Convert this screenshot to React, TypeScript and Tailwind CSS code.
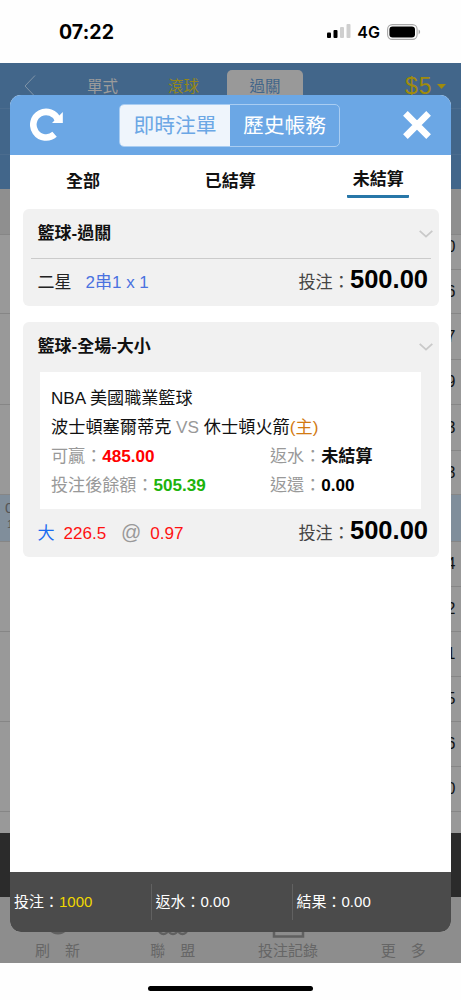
import clsx from "clsx";

const boardRows = [
  { odds: ["0", "6"], height: "h-[79px]", first: "h-[34px] pb-[10px]" },
  { odds: ["7", "9"], height: "h-[91px]", first: "h-[45px]" },
  { odds: ["3", "3"], height: "h-[90px]", first: "h-[45px]" },
  { odds: [""], height: "h-[47px]", first: "h-[46px]", active: true },
  { odds: ["4", "2"], height: "h-[90px]", first: "h-[44px]" },
  { odds: ["1", "5"], height: "h-[90px]", first: "h-[44px]" },
  { odds: ["6", "0"], height: "h-[90px]", first: "h-[44px]" },
];

const tabs = ["全部", "已結算", "未結算"];

const totals = [
  { label: "投注", value: "1000", highlight: true },
  { label: "返水", value: "0.00" },
  { label: "結果", value: "0.00" },
];

function StatusBar() {
  return (
    <div className="flex h-[63px] shrink-0 items-center bg-[#fefefe] pr-[40px] pl-[59px] font-['Inter',sans-serif] font-semibold text-black">
      <span className="text-[19.5px] leading-6 font-bold tracking-[0.1px]">07:22</span>
      <div className="ml-auto flex items-center">
        <svg width="24" height="15" viewBox="0 0 24 15">
          <rect x="0" y="8.5" width="4" height="5.5" rx="1" fill="#000" />
          <rect x="6.5" y="6" width="4" height="8" rx="1" fill="#000" />
          <rect x="13" y="3" width="4" height="11" rx="1" fill="#cfcfcf" />
          <rect x="19.5" y="0" width="4" height="14" rx="1" fill="#cfcfcf" />
        </svg>
        <span className="ml-[6px] text-[16px] leading-6">4G</span>
        <svg className="ml-[7px]" width="34" height="16" viewBox="0 0 34 16">
          <rect x="0.6" y="0.6" width="29.5" height="14.8" rx="4.6" fill="none" stroke="#a8a8a8" strokeWidth="1.1" />
          <rect x="2.4" y="2.4" width="25.6" height="11" rx="3.2" fill="#000" />
          <path d="M31.6 5.6v4.8c2-.9 2-3.9 0-4.8z" fill="#a8a8a8" />
        </svg>
      </div>
    </div>
  );
}

function NavHeader() {
  return (
    <div className="h-[126px] shrink-0 bg-[#42668a]">
      <div className="flex h-[46px] border-b border-[#4b6c8e] pt-[7px] text-[15.5px] leading-[34px] text-[#9b9b9b]">
        <svg className="mt-[5px] ml-[24px]" width="12" height="22" viewBox="0 0 12 22" fill="none" stroke="#8295a8">
          <path d="M11 0.5L1 11l10 10.5" />
        </svg>
        <span className="ml-[51px]">單式</span>
        <span className="ml-[50px] text-[#94861a]">滾球</span>
        <span className="ml-[28px] h-[39px] w-[76px] rounded-t-[5px] bg-[#999] text-center text-[#42668a]">過關</span>
        <span className="ml-[102px] text-[23px] leading-[32px] tracking-[1px] text-[#a08b0c]">$5</span>
        <svg className="mt-[14px] ml-[4px]" width="9" height="5" viewBox="0 0 9 5">
          <path d="M0 0h9L4.5 5z" fill="#a08b0c" />
        </svg>
      </div>
      <div className="h-[46px] border-b border-[#4b6c8e]" />
    </div>
  );
}

function Board() {
  return (
    <div className="flex h-[644px] shrink-0 flex-col overflow-hidden bg-[#999]">
      <div className="h-[46px] shrink-0 border-b border-[#868686] bg-[#8f8f8f]" />
      {boardRows.map((row, i) => (
        <div key={i} className={clsx("flex shrink-0 border-b border-[#868686]", row.height, row.active && "bg-[#808e9b]")}>
          <div className="flex-1 pt-[4px] pl-[5px] text-[15px] leading-[17px] text-[#555]">
            {row.active && (
              <>
                <div>0</div>
                <div className="pl-[2px] text-[11px]">1</div>
              </>
            )}
          </div>
          <div className="flex w-[60px] flex-col">
            {row.odds.map((value, j) => (
              <div
                key={j}
                className={clsx(
                  "flex items-center justify-end pr-[5.5px] text-[16px] leading-none text-[#111]",
                  j === 0 ? row.first : "flex-1 border-t border-[#868686]",
                )}
              >
                {value}
              </div>
            ))}
          </div>
        </div>
      ))}
    </div>
  );
}

function BottomNav() {
  return (
    <div className="grid h-[66px] shrink-0 grid-cols-4 bg-[#8d8d8d] text-center text-[15px] leading-6 text-[#666]">
      <div>
        <svg className="mx-auto h-[42px]" width="40" height="42" viewBox="0 0 40 42" fill="none" stroke="#606060" strokeWidth="3">
          <circle cx="20" cy="25" r="11" />
        </svg>
        刷　新
      </div>
      <div>
        <svg className="mx-auto h-[42px]" width="40" height="42" viewBox="0 0 40 42" fill="none" stroke="#606060" strokeWidth="2.5">
          <circle cx="10.5" cy="32.5" r="4.5" />
          <circle cx="20" cy="32.5" r="4.5" />
          <circle cx="29.5" cy="32.5" r="4.5" />
        </svg>
        聯　盟
      </div>
      <div>
        <svg className="mx-auto h-[42px]" width="40" height="42" viewBox="0 0 40 42" fill="none" stroke="#606060" strokeWidth="2.5">
          <rect x="6" y="12" width="29" height="27.5" />
        </svg>
        投注記錄
      </div>
      <div>
        <div className="h-[42px]" />
        更　多
      </div>
    </div>
  );
}

function CardTitle({ children }: { children: string }) {
  return (
    <div className="flex h-[50px] items-center justify-between pr-[5.5px] pl-[14.5px] text-[17px] font-bold text-[#111]">
      {children}
      <svg width="14" height="8" viewBox="0 0 14 8" fill="none" stroke="#c9c9c9" strokeWidth="1.8">
        <path d="M0.7 0.8L7 6.6l6.3-5.8" />
      </svg>
    </div>
  );
}

function Stake({ amount }: { amount: string }) {
  return (
    <span className="ml-auto flex items-baseline">
      <span className="text-[17.2px] text-[#444]">投注：</span>
      <span className="text-[25.5px] font-bold text-black">{amount}</span>
    </span>
  );
}

function BetDialog() {
  return (
    <div className="absolute top-[95px] left-[9.5px] flex h-[837px] w-[441.5px] flex-col overflow-hidden rounded-[11px] bg-white">
      <div className="flex h-[60px] shrink-0 items-center bg-[#6ba7e5] pr-[20px] pl-[20.5px]">
        <svg width="34" height="34" viewBox="0 0 34 34">
          <path d="M28 12A12.8 12.8 0 1 0 24.6 26.3" fill="none" stroke="#fff" strokeWidth="6.6" />
          <path d="M32.8 4v10.9H22z" fill="#fff" />
        </svg>
        <div className="ml-[55px] flex h-[43px] w-[221px] overflow-hidden rounded-[5px] border border-[#a9cdf2] text-center text-[20.8px] leading-[41px]">
          <div className="w-[110px] bg-[#eff5fc] text-[#6ba7e5]">即時注單</div>
          <div className="flex-1 text-white">歷史帳務</div>
        </div>
        <svg className="ml-auto" width="28" height="28" viewBox="0 0 28 28" fill="none" stroke="#fff" strokeWidth="6.6">
          <path d="M2.4 2.4l23.2 23.2M25.6 2.4L2.4 25.6" />
        </svg>
      </div>

      <div className="grid h-[54px] shrink-0 grid-cols-3 text-center text-[17px] leading-[53px] font-bold text-[#111]">
        {tabs.map((tab) => (
          <div key={tab}>
            {tab === "未結算" ? (
              <div className="ml-[43.5px] h-[42.5px] w-[62px] rounded-b-[1px] border-b-3 border-[#2877a8] leading-[50px]">{tab}</div>
            ) : (
              tab
            )}
          </div>
        ))}
      </div>

      <div className="flex flex-1 flex-col gap-4 pr-[12.5px] pl-[13.5px]">
        <section className="h-[97px] rounded-[6px] bg-[#f1f1f1]">
          <CardTitle>籃球-過關</CardTitle>
          <div className="mx-2 -mt-px flex h-[42px] items-baseline border-t border-[#cbcbcb] pr-[2.5px] pl-[6.5px] text-[17px] leading-[40px]">
            <span className="text-[#222]">二星</span>
            <span className="ml-[14px] text-[#4a72e0]">2串1 x 1</span>
            <Stake amount="500.00" />
          </div>
        </section>

        <section className="h-[235px] rounded-[6px] bg-[#f1f1f1]">
          <CardTitle>籃球-全場-大小</CardTitle>
          <div className="mr-[18px] ml-[17px] h-[137px] bg-white pt-[12px] pl-[11px] text-[17.1px] leading-[29px] text-[#999]">
            <div className="text-[#111]">NBA 美國職業籃球</div>
            <div className="text-[17.2px] whitespace-nowrap">
              <span className="text-[#111]">波士頓塞爾蒂克</span> VS <span className="text-[#111]">休士頓火箭</span>
              <span className="text-[#d27a12]">(主)</span>
            </div>
            <div className="grid grid-cols-[219px_1fr]">
              <div>
                可贏：<b className="text-[#f00]">485.00</b>
              </div>
              <div>
                返水：<b className="text-[#111]">未結算</b>
              </div>
              <div>
                投注後餘額：<b className="text-[#1db30b]">505.39</b>
              </div>
              <div>
                返還：<b className="text-black">0.00</b>
              </div>
            </div>
          </div>
          <div className="flex h-[46px] items-baseline pr-[10.5px] pl-[14.5px] text-[17.1px] leading-[42px] text-[#f11]">
            <span className="text-[#1a6cf0]">大</span>
            <span className="ml-[9px]">226.5</span>
            <span className="ml-[14.5px] text-[20px] text-[#999]">@</span>
            <span className="ml-[9px]">0.97</span>
            <Stake amount="500.00" />
          </div>
        </section>
      </div>

      <div className="flex h-[60px] shrink-0 items-center bg-[#4b4b4b] text-[15px] text-white">
        {totals.map((item, i) => (
          <div
            key={item.label}
            className={clsx("h-[36px] leading-[36px]", i > 0 ? "w-[141px] border-l border-[#616161] pl-[3.5px]" : "w-[141.5px] pl-[4.5px]")}
          >
            {item.label}：<span className={item.highlight ? "text-[#f0d800]" : ""}>{item.value}</span>
          </div>
        ))}
      </div>
    </div>
  );
}

export default function App() {
  return (
    <div
      lang="zh-Hant"
      className="relative flex h-[1000px] w-[461px] flex-col overflow-hidden bg-[#fefefe] font-['Liberation_Sans','Noto_Sans_CJK_TC',sans-serif]"
    >
      <StatusBar />
      <NavHeader />
      <Board />
      <div className="h-[64px] shrink-0 bg-[#2b2b2b]" />
      <BottomNav />
      <div className="mx-auto mt-[23px] h-[5px] w-[165px] rounded-full bg-black" />
      <BetDialog />
    </div>
  );
}
